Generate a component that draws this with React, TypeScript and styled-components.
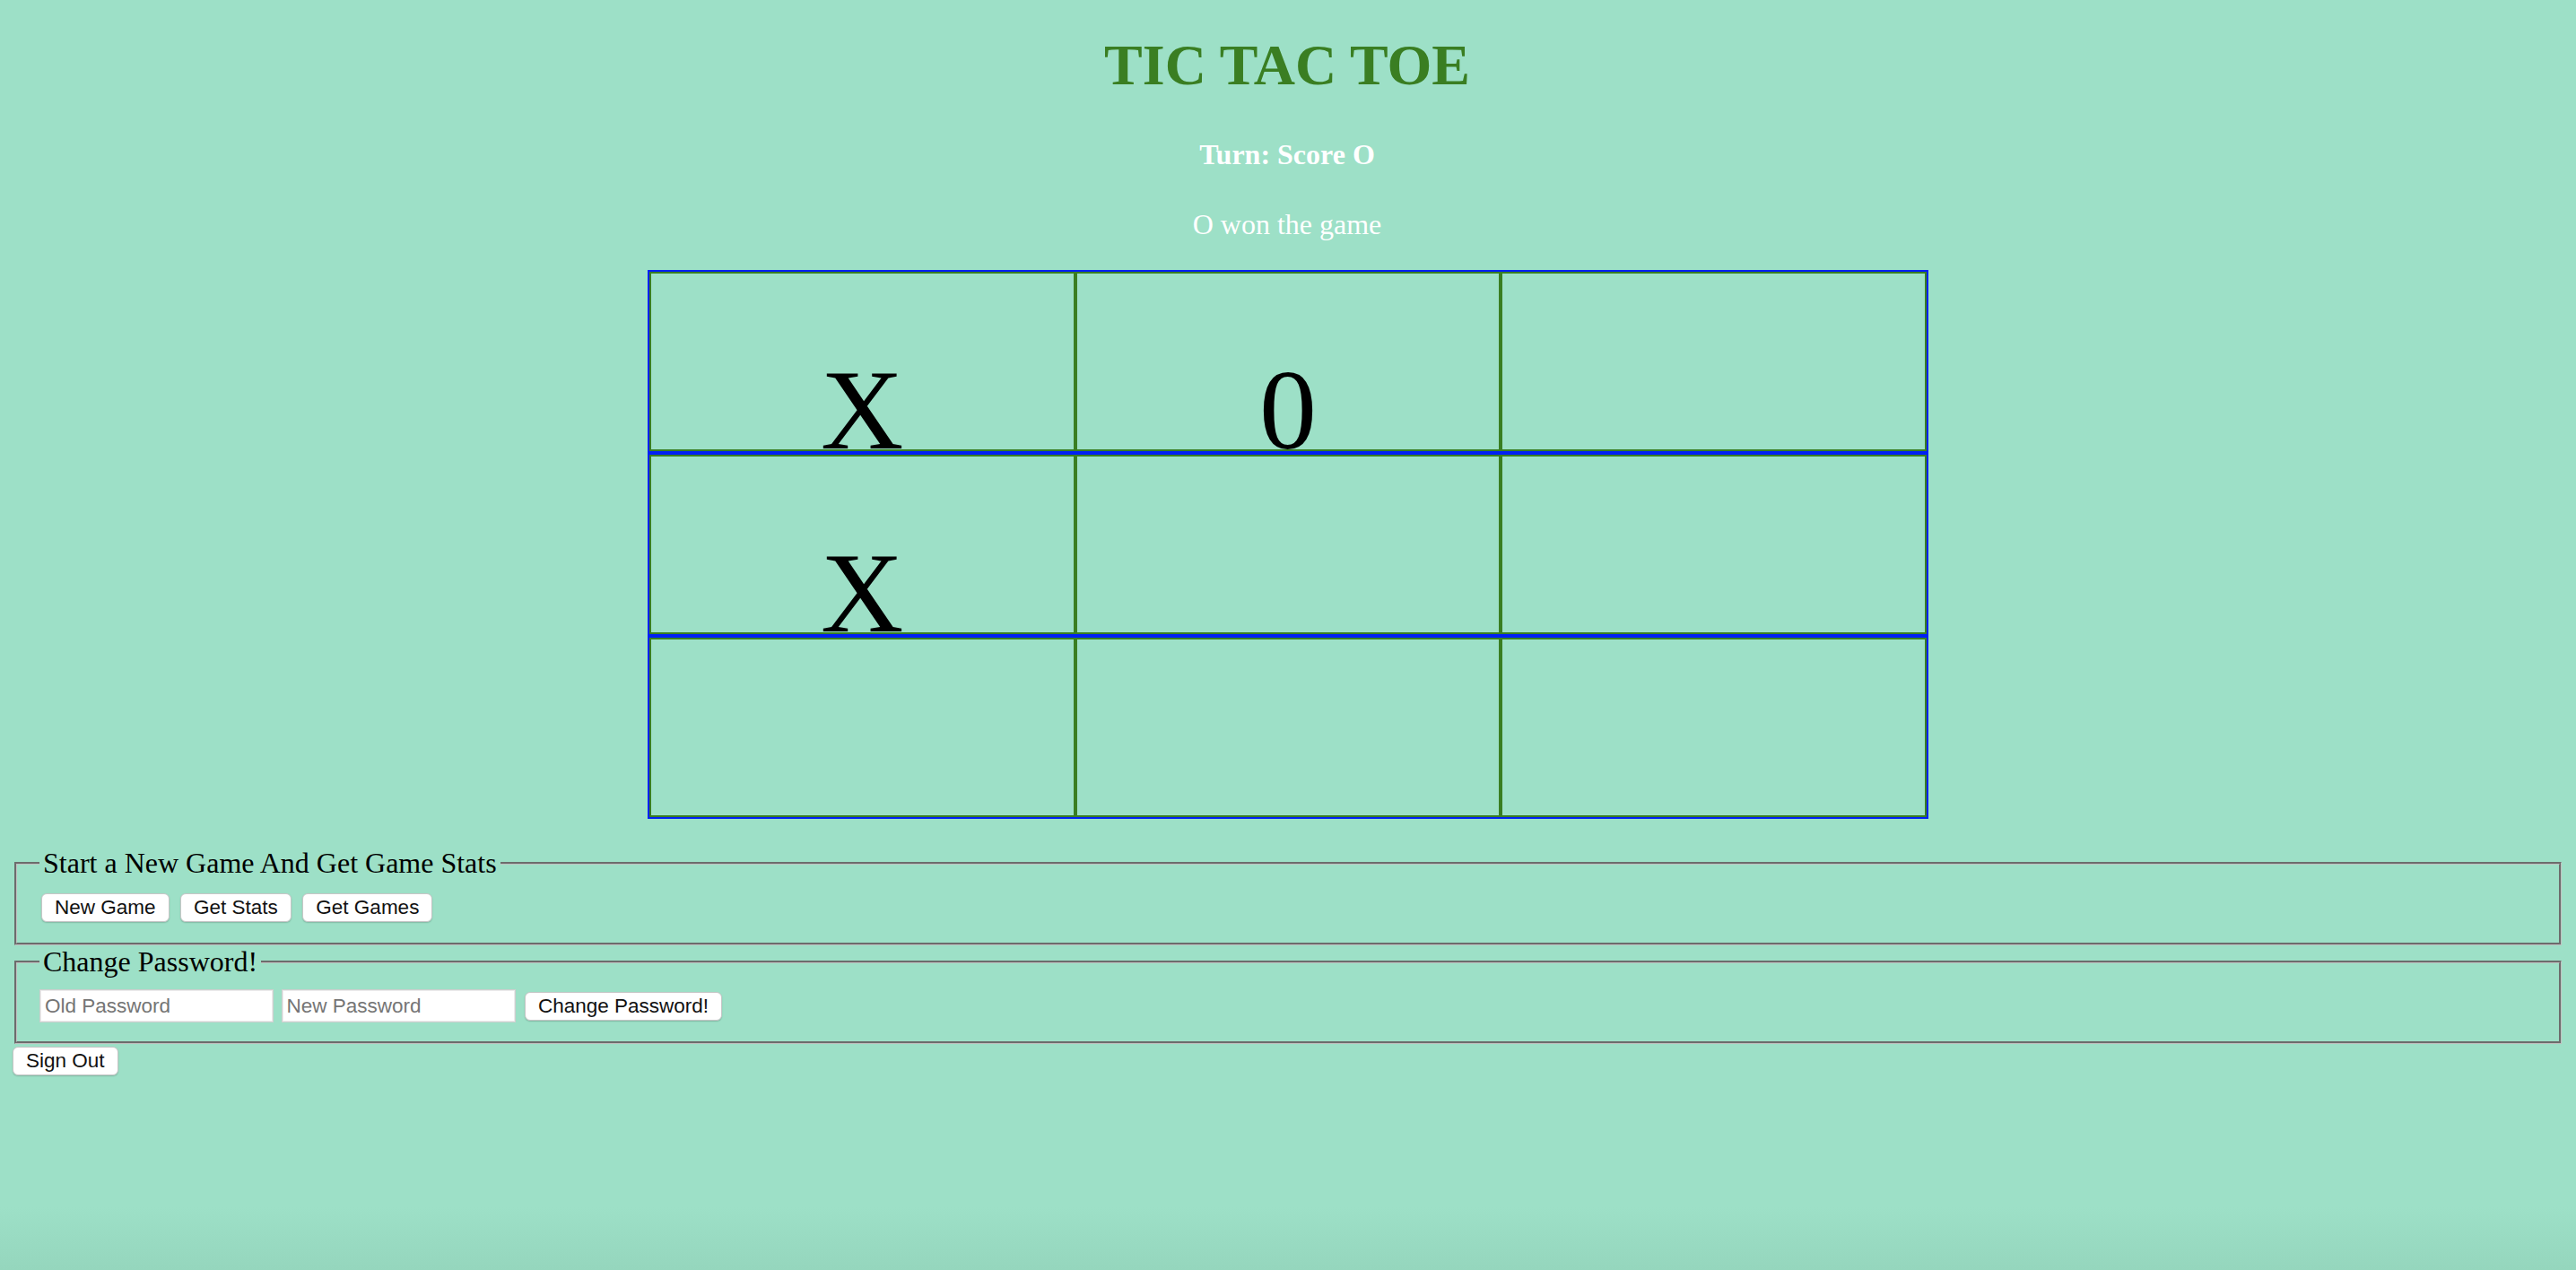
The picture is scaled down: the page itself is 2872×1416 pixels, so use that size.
import React from "react";
import styled, { createGlobalStyle } from "styled-components";

const GlobalStyle = createGlobalStyle`
  html {
    background: #9de0c7;
  }
  body {
    margin: 0;
    min-height: 100vh;
    font-family: "Liberation Serif", "Times New Roman", serif;
    background: linear-gradient(
      to bottom,
      #9de0c7 0,
      #9de0c7 calc(100% - 70px),
      #95d6bd 100%
    );
  }
`;

const Page = styled.div`
  display: flex;
  flex-direction: column;
  padding: 0 16px 0 14px;
`;

const Header = styled.header`
  display: flex;
  flex-direction: column;
  align-items: center;
`;

const Title = styled.h1`
  margin: 36px 0 0;
  font-size: 64px;
  font-weight: 700;
  line-height: normal;
  color: #3a7e22;
`;

const TurnLabel = styled.h4`
  margin: 44px 0 0;
  font-size: 32px;
  font-weight: 700;
  line-height: normal;
  color: #ffffff;
`;

const Status = styled.p`
  margin: 40.5px 0 0;
  font-size: 32px;
  line-height: normal;
  color: #ffffff;
`;

const Board = styled.div`
  align-self: center;
  width: 1428px;
  margin: 32px 0 31px 2px;
  display: flex;
  flex-direction: column;
`;

const Row = styled.div`
  display: grid;
  grid-template-columns: repeat(3, 1fr);
  border: 2px solid #0020f4;
`;

const Cell = styled.div`
  box-sizing: border-box;
  height: 200px;
  border: 2px solid #3a7e22;
  padding-top: 79px;
  text-align: center;
  font-size: 128px;
  line-height: normal;
  color: #000;
  overflow: visible;
`;

const Fieldset = styled.fieldset`
  margin: 0 0 0 2px;
  padding: 11px 25px 19px;
  border: 3px groove #c0c0c0;
  min-inline-size: 0;
`;

const Legend = styled.legend`
  padding: 0 4px;
  font-family: "Liberation Serif", "Times New Roman", serif;
  font-size: 32px;
  line-height: normal;
  color: #000;
`;

const ControlRow = styled.div`
  display: flex;
  align-items: center;
  gap: 8.5px;
  min-height: 40px;
`;

const Button = styled.button`
  margin: 0 2px;
  height: 32px;
  padding: 0 14px;
  font-family: "Liberation Sans", Arial, sans-serif;
  font-size: 22.5px;
  color: #111;
  background: #ffffff;
  border: 1px solid #c6c6c6;
  border-radius: 6px;
  box-shadow: 0 1px 1.5px rgba(0, 0, 0, 0.18);
  cursor: pointer;
`;

const SignOutButton = styled(Button)`
  margin: 0;
`;

const TextInput = styled.input`
  box-sizing: border-box;
  width: 261px;
  height: 37px;
  padding: 0 5px;
  font-family: "Liberation Sans", Arial, sans-serif;
  font-size: 22.5px;
  color: #111;
  background: #ffffff;
  border: 1px solid #cfcfcf;
  box-shadow: inset 0 0 0 1px #ececec;
  outline: none;
  &::placeholder {
    color: #757575;
  }
`;

const Footer = styled.div`
  display: flex;
  margin-top: 3px;
`;

const board: string[][] = [
  ["X", "0", ""],
  ["X", "", ""],
  ["", "", ""],
];

export default function App() {
  return (
    <>
      <GlobalStyle />
      <Page>
        <Header>
          <Title>TIC TAC TOE</Title>
          <TurnLabel>Turn: Score O</TurnLabel>
          <Status>O won the game</Status>
        </Header>
        <Board>
          {board.map((row, r) => (
            <Row key={r}>
              {row.map((mark, c) => (
                <Cell key={c}>{mark}</Cell>
              ))}
            </Row>
          ))}
        </Board>
        <Fieldset>
          <Legend>Start a New Game And Get Game Stats</Legend>
          <ControlRow>
            <Button type="button">New Game</Button>
            <Button type="button">Get Stats</Button>
            <Button type="button">Get Games</Button>
          </ControlRow>
        </Fieldset>
        <Fieldset>
          <Legend>Change Password!</Legend>
          <ControlRow>
            <TextInput type="password" placeholder="Old Password" />
            <TextInput type="password" placeholder="New Password" />
            <Button type="button">Change Password!</Button>
          </ControlRow>
        </Fieldset>
        <Footer>
          <SignOutButton type="button">Sign Out</SignOutButton>
        </Footer>
      </Page>
    </>
  );
}
